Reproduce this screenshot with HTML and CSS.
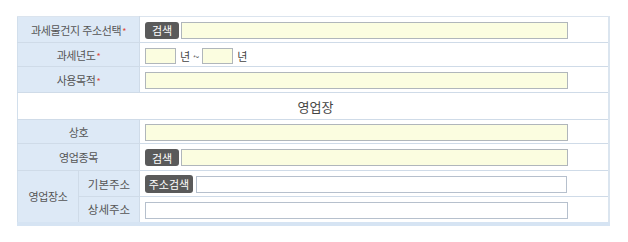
FILE: index.html
```html
<!DOCTYPE html>
<html lang="ko">
  <head>
    <meta charset="UTF-8" />
    <title>과세물건지</title>
    <link rel="stylesheet" href="styles.css">
  </head>
  <body>
    <table class="form-table">
      <colgroup>
        <col class="col-a" />
        <col class="col-b" />
        <col />
      </colgroup>
      <tr class="row-26">
        <th colspan="2">과세물건지 주소선택<span class="req">*</span></th>
        <td>
          <button type="button" class="btn">검색</button><input type="text" class="field field-btn" />
        </td>
      </tr>
      <tr class="row-24">
        <th colspan="2">과세년도<span class="req">*</span></th>
        <td>
          <input type="text" class="field field-year" /><span class="unit">년 ~</span><input type="text" class="field field-year" /><span class="unit">년</span>
        </td>
      </tr>
      <tr class="row-26">
        <th colspan="2">사용목적<span class="req">*</span></th>
        <td><input type="text" class="field field-full" /></td>
      </tr>
      <tr class="row-27">
        <td colspan="3" class="section">영업장</td>
      </tr>
      <tr class="row-24">
        <th colspan="2">상호</th>
        <td><input type="text" class="field field-full" /></td>
      </tr>
      <tr class="row-27">
        <th colspan="2">영업종목</th>
        <td>
          <button type="button" class="btn">검색</button><input type="text" class="field field-btn" />
        </td>
      </tr>
      <tr class="row-26">
        <th rowspan="2">영업장소</th>
        <th class="sub">기본주소</th>
        <td>
          <button type="button" class="btn btn-wide">주소검색</button><input type="text" class="field field-addr" />
        </td>
      </tr>
      <tr class="row-27">
        <th class="sub">상세주소</th>
        <td><input type="text" class="field field-white" /></td>
      </tr>
    </table>
  </body>
</html>
```

FILE: styles.css
```css
/* Page */
body {
  margin: 0;
  padding: 16px 0 0 17px;
  background: #fff;
  font-family: "Noto Sans CJK KR", "Noto Sans", sans-serif;
  font-size: 11px;
  color: #555;
}

/* Table */
.form-table {
  width: 593px;
  border-collapse: collapse;
  border-top: 1px solid #dbe4ee;
  border-left: 1px solid #d2dfec;
  border-right: 2px solid #dbe5ef;
  border-bottom: 4px solid #d6e4f3;
}

.col-a,
.col-b {
  width: 61px;
}

.form-table th,
.form-table td {
  border-bottom: 1px solid #cfdbe8;
  padding: 0;
}

.form-table th {
  background-color: #dde9f6;
  font-weight: normal;
  color: #555;
  text-align: center;
  letter-spacing: -0.4px;
  border-right: 1px solid #cfdbe8;
}

.form-table th.sub {
  font-size: 11.5px;
  letter-spacing: 0;
}

.form-table td {
  padding-left: 5px;
  white-space: nowrap;
}

.row-24 { height: 24px; }
.row-26 { height: 26px; }
.row-27 { height: 27px; }

.req {
  color: #e04a3a;
  font-size: 9px;
  margin-left: 1px;
}

.section {
  text-align: center;
  font-size: 13px;
  color: #444;
  background: #fff;
}

/* Inputs and buttons */
.field {
  height: 17px;
  box-sizing: border-box;
  border: 1px solid #b0b6bb;
  background-color: #fbfde0;
  vertical-align: middle;
  margin: 0;
  padding: 0 3px;
}

.field-full {
  width: 423px;
}

.field-btn {
  width: 387px;
  margin-left: 2px;
}

.field-year {
  width: 31px;
  height: 16px;
}

.field-addr {
  width: 371px;
  margin-left: 3px;
  background-color: #fff;
  border-color: #b6c0cd;
}

.field-white {
  width: 423px;
  background-color: #fff;
  border-color: #b6c0cd;
}

.unit {
  display: inline-block;
  vertical-align: middle;
  margin: 0 3px 0 4px;
  color: #444;
}

.btn {
  height: 17px;
  width: 34px;
  padding: 0;
  margin: 0;
  border: 0;
  border-radius: 3px;
  background-color: #5a5a5a;
  color: #fff;
  font-family: inherit;
  font-size: 11px;
  vertical-align: middle;
}

.btn-wide {
  width: 48px;
  height: 18px;
}
```
